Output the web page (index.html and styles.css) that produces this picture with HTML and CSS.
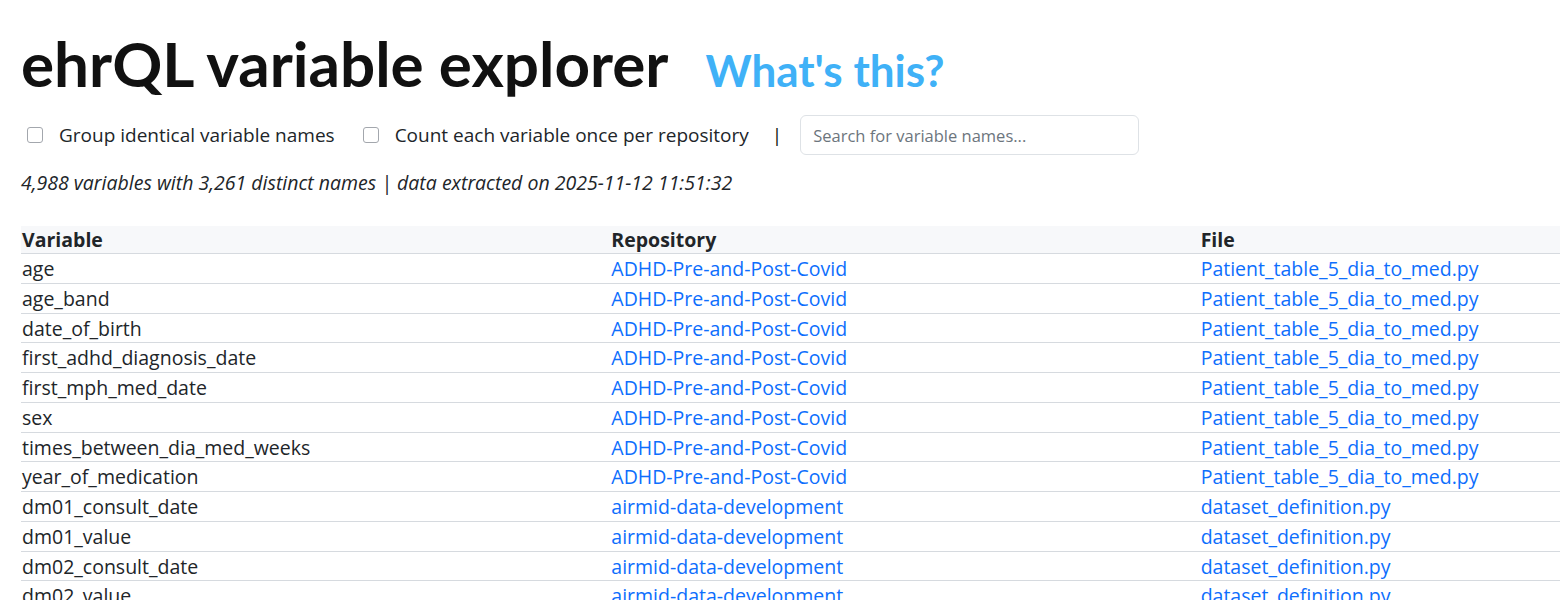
FILE: index.html
```html
<!DOCTYPE html>
<html lang="en">
<head>
  <meta charset="UTF-8" />
  <title>ehrQL variable explorer</title>
  <meta name="viewport" content="width=device-width, initial-scale=1.0">
  <link rel="stylesheet" href="styles.css">
</head>
<body>
  <header class="page-header">
    <h1>ehrQL variable explorer</h1>
    <a class="whats-this" href="#about">What's this?</a>
  </header>

  <div class="controls">
    <label class="check"><input type="checkbox" id="groupNames"> Group identical variable names</label>
    <label class="check"><input type="checkbox" id="oncePerRepo"> Count each variable once per repository</label>
    <span class="sep">|</span>
    <input type="text" class="search" id="search" placeholder="Search for variable names...">
  </div>

  <p class="summary">4,988 variables with 3,261 distinct names | data extracted on 2025-11-12 11:51:32</p>

  <table class="variables">
    <thead>
      <tr>
        <th>Variable</th>
        <th>Repository</th>
        <th>File</th>
      </tr>
    </thead>
    <tbody>
      <tr><td>age</td><td><a href="#">ADHD-Pre-and-Post-Covid</a></td><td><a href="#">Patient_table_5_dia_to_med.py</a></td></tr>
      <tr><td>age_band</td><td><a href="#">ADHD-Pre-and-Post-Covid</a></td><td><a href="#">Patient_table_5_dia_to_med.py</a></td></tr>
      <tr><td>date_of_birth</td><td><a href="#">ADHD-Pre-and-Post-Covid</a></td><td><a href="#">Patient_table_5_dia_to_med.py</a></td></tr>
      <tr><td>first_adhd_diagnosis_date</td><td><a href="#">ADHD-Pre-and-Post-Covid</a></td><td><a href="#">Patient_table_5_dia_to_med.py</a></td></tr>
      <tr><td>first_mph_med_date</td><td><a href="#">ADHD-Pre-and-Post-Covid</a></td><td><a href="#">Patient_table_5_dia_to_med.py</a></td></tr>
      <tr><td>sex</td><td><a href="#">ADHD-Pre-and-Post-Covid</a></td><td><a href="#">Patient_table_5_dia_to_med.py</a></td></tr>
      <tr><td>times_between_dia_med_weeks</td><td><a href="#">ADHD-Pre-and-Post-Covid</a></td><td><a href="#">Patient_table_5_dia_to_med.py</a></td></tr>
      <tr><td>year_of_medication</td><td><a href="#">ADHD-Pre-and-Post-Covid</a></td><td><a href="#">Patient_table_5_dia_to_med.py</a></td></tr>
      <tr><td>dm01_consult_date</td><td><a href="#">airmid-data-development</a></td><td><a href="#">dataset_definition.py</a></td></tr>
      <tr><td>dm01_value</td><td><a href="#">airmid-data-development</a></td><td><a href="#">dataset_definition.py</a></td></tr>
      <tr><td>dm02_consult_date</td><td><a href="#">airmid-data-development</a></td><td><a href="#">dataset_definition.py</a></td></tr>
      <tr><td>dm02_value</td><td><a href="#">airmid-data-development</a></td><td><a href="#">dataset_definition.py</a></td></tr>
      <tr><td>dm03_consult_date</td><td><a href="#">airmid-data-development</a></td><td><a href="#">dataset_definition.py</a></td></tr>
      <tr><td>dm03_value</td><td><a href="#">airmid-data-development</a></td><td><a href="#">dataset_definition.py</a></td></tr>
    </tbody>
  </table>
</body>
</html>
```

FILE: styles.css
```css
html {
  overflow-x: hidden;
}

body {
  font-family: "Open Sans", "DejaVu Sans", sans-serif;
  font-size: 19.5px;
  line-height: 1.5;
  color: #212529;
  background: #fff;
  margin: 0;
  padding: 0 21px;
}

a {
  color: #0d6efd;
  text-decoration: none;
}

.page-header {
  display: flex;
  align-items: baseline;
  gap: 37px;
  padding-top: 26px;
}

.page-header h1 {
  font-family: "Lato", sans-serif;
  font-size: 62px;
  font-weight: 700;
  line-height: 1.2;
  margin: 0;
  color: #111;
}

.whats-this {
  font-family: "Lato", sans-serif;
  font-size: 44px;
  font-weight: 700;
  color: #3fb1f7;
}

.controls {
  display: flex;
  align-items: center;
  margin-top: 12px;
  height: 40px;
  font-size: 19px;
}

.check {
  display: flex;
  align-items: center;
  gap: 16px;
  margin-left: 6px;
  margin-right: 22px;
}

.check input {
  appearance: none;
  width: 16px;
  height: 16px;
  margin: 0;
  border: 1px solid #a3a7ad;
  border-radius: 3px;
  background: #fff;
}

.sep {
  color: #111;
  margin-left: 1px;
  margin-right: 18px;
}

.search {
  width: 339px;
  height: 40px;
  box-sizing: border-box;
  padding: 0 12px;
  font-family: inherit;
  font-size: 16.5px;
  color: #212529;
  border: 1px solid #dee2e6;
  border-radius: 6px;
}

.search::placeholder {
  color: #6c757d;
}

.summary {
  font-style: italic;
  margin: 13px 0 0;
}

.variables {
  width: 1768px;
  table-layout: fixed;
  border-collapse: collapse;
  margin-top: 29px;
}

.variables th,
.variables td {
  text-align: left;
  padding: 1px 1px 0;
  line-height: 27.73px;
  border-bottom: 1px solid #d6dadf;
}

.variables th {
  background: #f7f8fa;
  font-weight: 700;
  line-height: 27px;
  padding-top: 0;
}
```
